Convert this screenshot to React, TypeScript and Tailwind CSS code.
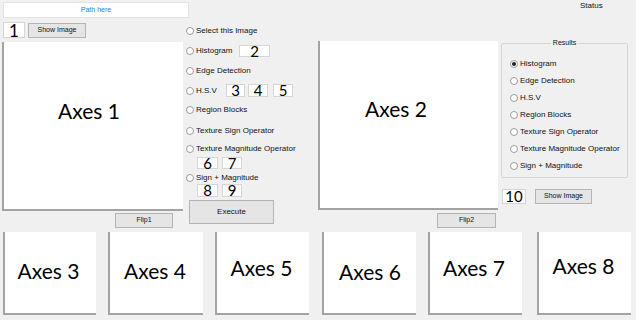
import React from "react";

const lato = "font-['Lato','Open_Sans',sans-serif]";

function Radio({ label, checked = false }: { label: string; checked?: boolean }) {
  return (
    <div className="flex items-center h-[12px]">
      <span className="w-[8px] h-[8px] rounded-full border border-[#9c9c9c] bg-white flex items-center justify-center shrink-0">
        {checked && <span className="w-[4px] h-[4px] rounded-full bg-[#222]" />}
      </span>
      <span className="ml-[2px] text-[8px] leading-[12px] whitespace-nowrap text-[#111]">{label}</span>
    </div>
  );
}

function NumBox({ n, w, h, size = "text-[15px]", ml = "" }: { n: string; w: string; h: string; size?: string; ml?: string }) {
  return (
    <div className={`${w} ${h} ${ml} bg-white border border-[#d6d6d6] flex items-center justify-center ${lato} ${size} leading-none text-black shrink-0`}>
      {n}
    </div>
  );
}

function Btn({ label, cls, text = "text-[7px]" }: { label: string; cls: string; text?: string }) {
  return (
    <div className={`${cls} bg-[#e5e5e5] border border-[#b4b4b4] flex items-center justify-center ${text} text-[#111] shrink-0`}>
      {label}
    </div>
  );
}

function Axes({ label, cls, pad }: { label: string; cls: string; pad: string }) {
  return (
    <div className={`${cls} bg-white border-l-2 border-b-2 border-[#a3a3a3] flex items-center justify-center shrink-0 ${pad}`}>
      <span className={`${lato} text-[21px] leading-none text-black whitespace-nowrap`}>{label}</span>
    </div>
  );
}

export default function App() {
  return (
    <div className="w-[636px] h-[320px] bg-[#f0f0f0] overflow-hidden font-['Liberation_Sans',Arial,sans-serif] text-black">
      <div className="flex h-[232px]">
        {/* Column A */}
        <div className="w-[186px] shrink-0 flex flex-col items-start">
          <div className="mt-[2px] ml-[3px] w-[186px] h-[16px] shrink-0 bg-white border border-[#e2e2e2] flex items-center justify-center text-[7px] text-[#2b7fd3]">
            Path here
          </div>
          <div className="mt-[4px] ml-[3px] flex items-start">
            <NumBox n="1" w="w-[22px]" h="h-[16px]" size="text-[17px]" />
            <Btn label="Show Image" cls="ml-[3px] mt-[1px] w-[58px] h-[15px]" />
          </div>
          <Axes label="Axes 1" cls="mt-[4px] ml-[2px] w-[181px] h-[169px]" pad="pr-[9px] pb-[30px]" />
          <Btn label="Flip1" cls="mt-[2px] ml-[115px] w-[58px] h-[15px]" />
        </div>

        {/* Column B */}
        <div className="w-[132px] shrink-0 flex flex-col items-start">
          <div className="mt-[25px]">
            <Radio label="Select this Image" />
          </div>
          <div className="mt-[8px] flex items-center h-[12px]">
            <div className="w-[53px]">
              <Radio label="Histogram" />
            </div>
            <NumBox n="2" w="w-[31px]" h="h-[12px]" size="text-[15px]" />
          </div>
          <div className="mt-[8px]">
            <Radio label="Edge Detection" />
          </div>
          <div className="mt-[7px] flex items-center h-[13px]">
            <div className="w-[40px]">
              <Radio label="H.S.V" />
            </div>
            <NumBox n="3" w="w-[19px]" h="h-[13px]" />
            <NumBox n="4" w="w-[20px]" h="h-[13px]" ml="ml-[3px]" />
            <NumBox n="5" w="w-[20px]" h="h-[13px]" ml="ml-[5px]" />
          </div>
          <div className="mt-[7px]">
            <Radio label="Region Blocks" />
          </div>
          <div className="mt-[9px]">
            <Radio label="Texture Sign Operator" />
          </div>
          <div className="mt-[6px]">
            <Radio label="Texture Magnitude Operator" />
          </div>
          <div className="mt-[2px] ml-[11px] flex">
            <NumBox n="6" w="w-[21px]" h="h-[12px]" />
            <NumBox n="7" w="w-[20px]" h="h-[12px]" ml="ml-[4px]" />
          </div>
          <div className="mt-[3px]">
            <Radio label="Sign + Magnitude" />
          </div>
          <div className="ml-[11px] flex">
            <NumBox n="8" w="w-[21px]" h="h-[13px]" />
            <NumBox n="9" w="w-[20px]" h="h-[13px]" ml="ml-[4px]" />
          </div>
          <Btn label="Execute" cls="mt-[3px] ml-[3px] w-[85px] h-[24px]" text="text-[8px]" />
        </div>

        {/* Column C */}
        <div className="w-[183px] shrink-0 flex flex-col items-start">
          <Axes label="Axes 2" cls="mt-[41px] w-[180px] h-[169px]" pad="pr-[26px] pb-[33px]" />
          <Btn label="Flip2" cls="mt-[3px] ml-[119px] w-[59px] h-[15px]" />
        </div>

        {/* Column D */}
        <div className="flex-1 flex flex-col items-start">
          <div className="h-[11px] pl-[79px] text-[8px] leading-[11px] text-[#111]">Status</div>
          <div className="relative mt-[32px] w-[127px] h-[135px] border border-[#d6d6d6] rounded-[2px] pl-[8px] pt-[14px] flex flex-col gap-[5px]">
            <span className="absolute top-[-6px] left-0 right-0 mx-auto w-max px-[2px] bg-[#f0f0f0] text-[7px] leading-[10px] text-[#111]">
              Results
            </span>
            <Radio label="Histogram" checked />
            <Radio label="Edge Detection" />
            <Radio label="H.S.V" />
            <Radio label="Region Blocks" />
            <Radio label="Texture Sign Operator" />
            <Radio label="Texture Magnitude Operator" />
            <Radio label="Sign + Magnitude" />
          </div>
          <div className="mt-[11px] ml-[1px] flex items-start">
            <NumBox n="10" w="w-[24px]" h="h-[15px]" size="text-[15px]" />
            <Btn label="Show Image" cls="ml-[9px] w-[57px] h-[15px]" />
          </div>
        </div>
      </div>

      {/* Bottom row */}
      <div className="flex items-start">
        <Axes label="Axes 3" cls="ml-[3px] w-[93px] h-[83px]" pad="pb-[5px] pr-[4px]" />
        <Axes label="Axes 4" cls="ml-[12px] w-[95px] h-[83px]" pad="pb-[5px] pr-[3px]" />
        <Axes label="Axes 5" cls="ml-[12px] w-[94px] h-[83px]" pad="pb-[10px] pr-[3px]" />
        <Axes label="Axes 6" cls="ml-[13px] w-[94px] h-[83px]" pad="pb-[3px]" />
        <Axes label="Axes 7" cls="ml-[12px] w-[94px] h-[83px]" pad="pb-[11px] pr-[4px]" />
        <Axes label="Axes 8" cls="ml-[15px] w-[94px] h-[83px]" pad="pb-[15px] pr-[3px]" />
      </div>
    </div>
  );
}
